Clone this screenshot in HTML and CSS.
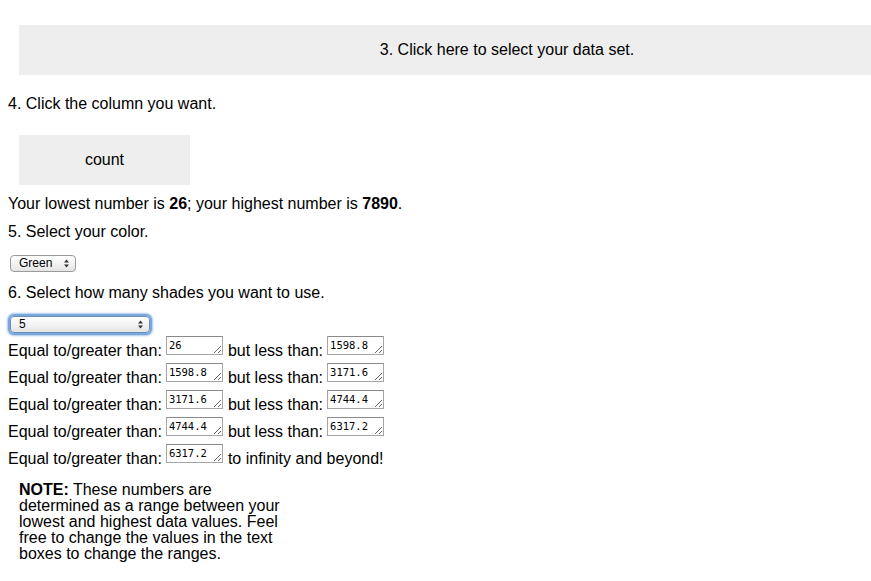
FILE: index.html
```html
<!DOCTYPE html>
<html lang="en">
<head>
    <meta charset="UTF-8">
    <meta name="viewport" content="width=device-width, initial-scale=1.0">
    <title>Map your data</title>
    <link rel="stylesheet" href="styles.css">
</head>
<body>
    <div class="data-btn">3. Click here to select your data set.</div>

    <p class="step step-4">4. Click the column you want.</p>
    <div class="column-btn">count</div>

    <p class="step step-range">Your lowest number is <b>26</b>; your highest number is <b>7890</b>.</p>
    <p class="step step-5">5. Select your color.</p>
    <div class="select-row select-row-color">
        <span class="select-wrap">
            <select class="pick pick-color">
                <option>Green</option>
                <option>Blue</option>
                <option>Red</option>
            </select>
            <svg class="arrows" width="7" height="9" viewBox="0 0 7 9"><path d="M3.5 0.5 L6 3.5 L1 3.5 Z M3.5 8.5 L6 5.5 L1 5.5 Z" fill="#333"/></svg>
        </span>
    </div>

    <p class="step step-6">6. Select how many shades you want to use.</p>
    <div class="select-row select-row-shades">
        <span class="select-wrap focused">
            <select class="pick pick-shades">
                <option>5</option>
                <option>4</option>
                <option>3</option>
            </select>
            <svg class="arrows" width="7" height="9" viewBox="0 0 7 9"><path d="M3.5 0.5 L6 3.5 L1 3.5 Z M3.5 8.5 L6 5.5 L1 5.5 Z" fill="#333"/></svg>
        </span>
    </div>

    <div class="ranges">
        <div class="range-row">
            <span>Equal to/greater than:</span><textarea class="val">26</textarea>
            <span>but less than:</span><textarea class="val">1598.8</textarea>
        </div>
        <div class="range-row">
            <span>Equal to/greater than:</span><textarea class="val">1598.8</textarea>
            <span>but less than:</span><textarea class="val">3171.6</textarea>
        </div>
        <div class="range-row">
            <span>Equal to/greater than:</span><textarea class="val">3171.6</textarea>
            <span>but less than:</span><textarea class="val">4744.4</textarea>
        </div>
        <div class="range-row">
            <span>Equal to/greater than:</span><textarea class="val">4744.4</textarea>
            <span>but less than:</span><textarea class="val">6317.2</textarea>
        </div>
        <div class="range-row">
            <span>Equal to/greater than:</span><textarea class="val">6317.2</textarea>
            <span>to infinity and beyond!</span>
        </div>
    </div>

    <div class="note">
        <b>NOTE:</b> These numbers are determined as a range between your lowest and highest data values. Feel free to change the values in the text boxes to change the ranges.
    </div>
</body>
</html>
```

FILE: styles.css
```css
html, body {
    overflow: hidden;
}
body {
    font-family: "Liberation Sans", Arial, sans-serif;
    font-size: 16px;
    color: #000;
    background: #fff;
    margin: 0;
    padding: 0 8px;
}
.data-btn {
    margin: 25px -8px 0 11px;
    padding-left: 124px;
    height: 50px;
    line-height: 50px;
    text-align: center;
    background-color: #eeeeee;
    cursor: pointer;
}
.step {
    margin: 0;
    line-height: 18px;
}
.step-4 {
    margin-top: 20px;
}
.column-btn {
    margin: 22px 0 0 11px;
    width: 171px;
    height: 50px;
    line-height: 50px;
    text-align: center;
    background-color: #eeeeee;
    cursor: pointer;
}
.step-range {
    margin-top: 10px;
}
.step-5 {
    margin-top: 10px;
}
.select-row {
    display: flex;
    height: 17px;
    padding-left: 2px;
}
.select-row-color {
    margin-top: 14px;
}
.step-6 {
    margin-top: 12px;
}
.select-row-shades {
    margin-top: 14px;
}
.select-wrap {
    position: relative;
    display: block;
    height: 17px;
    border-radius: 4px;
}
.select-wrap.focused {
    box-shadow: 0 0 0 2px #7aa8dc, 0 0 2px 3px #a9c8ec;
}
.pick {
    -webkit-appearance: none;
    appearance: none;
    display: block;
    box-sizing: border-box;
    height: 17px;
    margin: 0;
    padding: 0 0 0 8px;
    border: 1px solid #9a9a9a;
    border-radius: 4px;
    background: linear-gradient(#ffffff, #f3f3f3 50%, #e4e4e4);
    font-family: "Liberation Sans", Arial, sans-serif;
    font-size: 12px;
    line-height: 15px;
    color: #000;
    outline: none;
}
.pick-color {
    width: 66px;
}
.pick-shades {
    width: 140px;
    border-color: #6b8fbd;
}
.arrows {
    position: absolute;
    right: 6px;
    top: 4px;
    pointer-events: none;
}
.ranges {
    margin-top: 0;
}
.range-row {
    display: flex;
    align-items: flex-end;
    height: 27px;
}
.range-row span {
    line-height: 18px;
    white-space: pre;
}
.val {
    box-sizing: border-box;
    width: 57px;
    height: 19px;
    margin: 0 5px 5px 4px;
    padding: 1px 2px;
    border: 1px solid #a5a5a5;
    border-top-color: #8a8a8a;
    font-family: "DejaVu Sans Mono", monospace;
    font-size: 10.5px;
    line-height: 14px;
    color: #000;
    overflow: hidden;
}
.note {
    margin: 14px 0 0 11px;
    width: 266px;
    line-height: 16px;
}
```
